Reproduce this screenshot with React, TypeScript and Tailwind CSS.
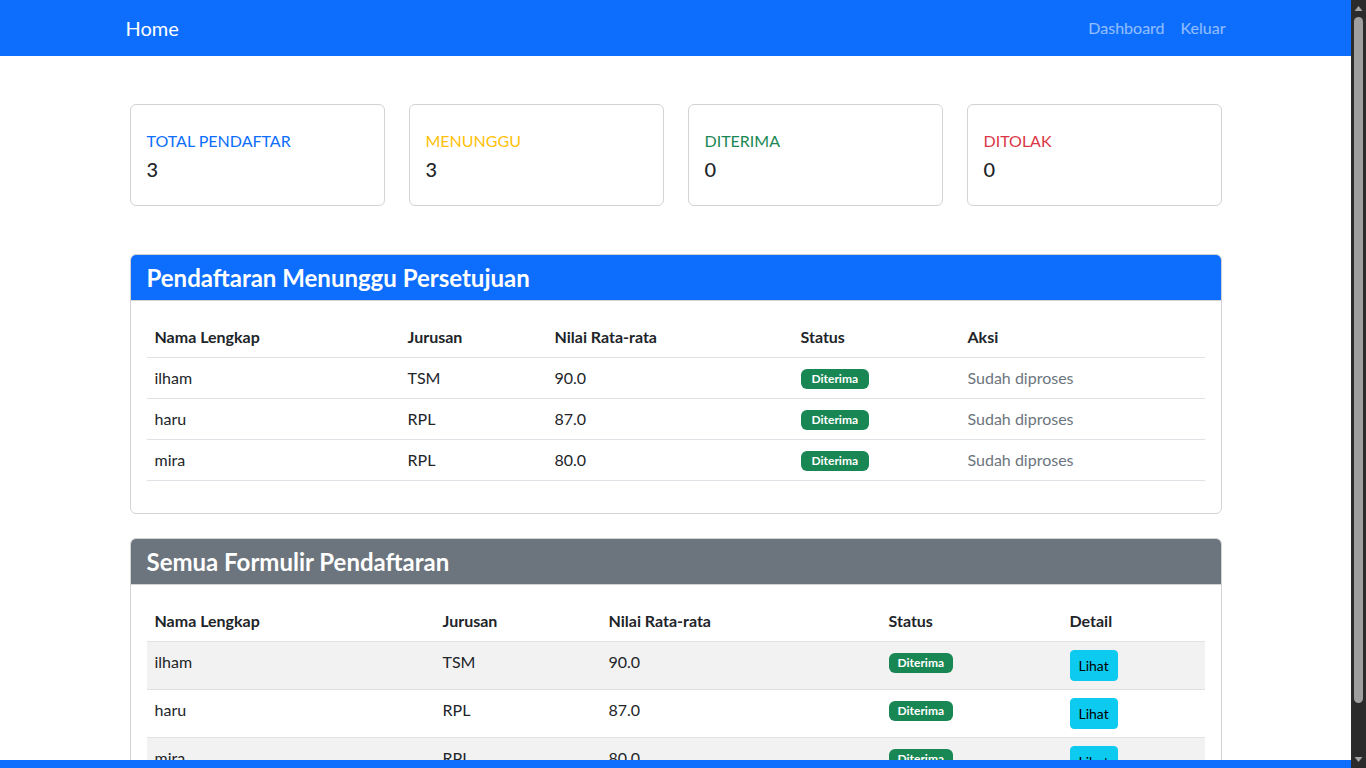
import React from 'react';

const font = { fontFamily: '"Segoe UI", Lato, "Noto Sans", sans-serif' };

const stats = [
  { label: 'TOTAL PENDAFTAR', value: 3, color: 'text-[#0d6efd]' },
  { label: 'MENUNGGU', value: 3, color: 'text-[#ffc107]' },
  { label: 'DITERIMA', value: 0, color: 'text-[#198754]' },
  { label: 'DITOLAK', value: 0, color: 'text-[#dc3545]' },
];

const rows = [
  { name: 'ilham', jurusan: 'TSM', nilai: '90.0' },
  { name: 'haru', jurusan: 'RPL', nilai: '87.0' },
  { name: 'mira', jurusan: 'RPL', nilai: '80.0' },
];

const Badge: React.FC<{ wide?: boolean }> = ({ wide }) => (
  <span
    className={
      'inline-block rounded-[6px] bg-[#198754] py-[4px] text-[12px] leading-[12px] font-bold text-white align-[1px] ' +
      (wide ? 'px-[11px]' : 'px-[9px]')
    }
  >
    Diterima
  </span>
);

const Panel: React.FC<{ title: string; header: string; children: React.ReactNode }> = ({ title, header, children }) => (
  <div className="overflow-hidden rounded-[6px] border border-[#d3d3d3] bg-white">
    <div className={header + ' border-b border-[#d3d3d3] px-4 py-2'}>
      <h3 className="text-[24px] leading-[29px] font-bold text-white">{title}</h3>
    </div>
    <div className="p-4">{children}</div>
  </div>
);

// browser scrollbar as in the reference
const Scrollbar = () => (
  <div className="fixed top-0 right-0 bottom-0 flex w-[15px] flex-col items-center bg-[#2b2b2b]">
    <svg width="9" height="17" viewBox="0 0 9 17" className="shrink-0">
      <path d="M0.5 11 L4.5 6 L8.5 11 Z" fill="#a3a3a3" />
    </svg>
    <div className="h-[686px] w-[9px] rounded-full bg-[#9f9f9f]" />
    <div className="flex-1" />
    <svg width="9" height="17" viewBox="0 0 9 17" className="shrink-0">
      <path d="M0.5 6 L4.5 11 L8.5 6 Z" fill="#a3a3a3" />
    </svg>
  </div>
);

export default function App() {
  return (
    <div className="min-h-screen bg-white pr-[15px] pb-10 text-[16px] text-[#212529]" style={font}>
      <nav className="-mr-[15px] h-14 bg-[#0d6efd] pr-[15px]">
        <div className="mx-auto flex h-14 w-[1100px] items-center justify-between">
          <span className="text-[20px] text-white">Home</span>
          <div className="flex gap-4 text-[16px] text-white/55">
            <span>Dashboard</span>
            <span>Keluar</span>
          </div>
        </div>
      </nav>

      <main className="mx-auto w-[1092px] pt-12">
        <div className="grid grid-cols-4 gap-6">
          {stats.map((s) => (
            <div key={s.label} className="rounded-[6px] border border-[#d3d3d3] px-4 py-6">
              <div className={s.color + ' leading-6'}>{s.label}</div>
              <div className="mt-[4px] text-[20px] leading-6 font-medium">{s.value}</div>
            </div>
          ))}
        </div>

        <div className="mt-12">
          <Panel title="Pendaftaran Menunggu Persetujuan" header="bg-[#0d6efd]">
            <table className="mb-4 w-full table-fixed border-collapse">
              <colgroup>
                <col className="w-[253px]" />
                <col className="w-[147px]" />
                <col className="w-[246px]" />
                <col className="w-[167px]" />
                <col />
              </colgroup>
              <thead>
                <tr className="border-b border-[#dee2e6] text-left">
                  <th className="p-2 leading-6 font-bold">Nama Lengkap</th>
                  <th className="p-2 leading-6 font-bold">Jurusan</th>
                  <th className="p-2 leading-6 font-bold">Nilai Rata-rata</th>
                  <th className="p-2 leading-6 font-bold">Status</th>
                  <th className="p-2 leading-6 font-bold">Aksi</th>
                </tr>
              </thead>
              <tbody>
                {rows.map((r) => (
                  <tr key={r.name} className="border-b border-[#dee2e6] align-top">
                    <td className="p-2 leading-6">{r.name}</td>
                    <td className="p-2 leading-6">{r.jurusan}</td>
                    <td className="p-2 leading-6">{r.nilai}</td>
                    <td className="p-2 leading-6">
                      <Badge wide />
                    </td>
                    <td className="p-2 leading-6 text-[#6c757d]">Sudah diproses</td>
                  </tr>
                ))}
              </tbody>
            </table>
          </Panel>
        </div>

        <div className="mt-6">
          <Panel title="Semua Formulir Pendaftaran" header="bg-[#6c757d]">
            <table className="mb-4 w-full table-fixed border-collapse">
              <colgroup>
                <col className="w-[288px]" />
                <col className="w-[166px]" />
                <col className="w-[280px]" />
                <col className="w-[181px]" />
                <col />
              </colgroup>
              <thead>
                <tr className="border-b border-[#dee2e6] text-left">
                  <th className="p-2 leading-6 font-bold">Nama Lengkap</th>
                  <th className="p-2 leading-6 font-bold">Jurusan</th>
                  <th className="p-2 leading-6 font-bold">Nilai Rata-rata</th>
                  <th className="p-2 leading-6 font-bold">Status</th>
                  <th className="p-2 leading-6 font-bold">Detail</th>
                </tr>
              </thead>
              <tbody>
                {rows.map((r, i) => (
                  <tr
                    key={r.name}
                    className={(i % 2 === 0 ? 'bg-[#f2f2f2] ' : '') + 'border-b border-[#dee2e6] align-top'}
                  >
                    <td className="p-2 leading-6">{r.name}</td>
                    <td className="p-2 leading-6">{r.jurusan}</td>
                    <td className="p-2 leading-6">{r.nilai}</td>
                    <td className="p-2 leading-6">
                      <Badge />
                    </td>
                    <td className="p-2 leading-6">
                      <button className="rounded-[4px] border border-[#0dcaf0] bg-[#0dcaf0] px-2 py-1 text-[14px] leading-[21px] text-black">
                        Lihat
                      </button>
                    </td>
                  </tr>
                ))}
              </tbody>
            </table>
          </Panel>
        </div>
      </main>

      <div className="fixed right-0 bottom-0 left-0 h-2 bg-[#0d6efd]" />
      <Scrollbar />
    </div>
  );
}
